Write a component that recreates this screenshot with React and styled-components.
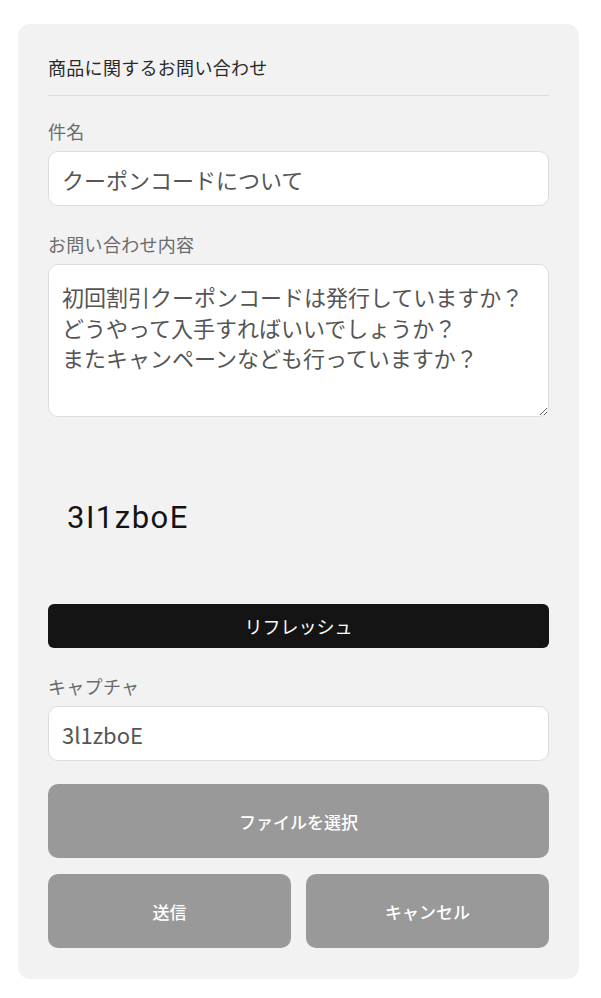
import React, { useState, useEffect, useRef } from 'react';
import styled, { createGlobalStyle } from 'styled-components';

const GlobalStyle = createGlobalStyle`
  * {
    box-sizing: border-box;
  }
  body {
    margin: 0;
    background: #fff;
    font-family: "Noto Sans CJK JP", "Noto Sans", sans-serif;
  }
`

const Page = styled.div`
  padding: 24px 22px 19px 18px;
`

const Card = styled.form`
  display: flex;
  flex-direction: column;
  background: #f2f2f2;
  border-radius: 12px;
  padding: 30px 30px 31px;
`

const Title = styled.h2`
  margin: 0;
  padding-bottom: 14px;
  border-bottom: 1px solid #dcdcdc;
  font-size: 18px;
  font-weight: 400;
  line-height: 27px;
  letter-spacing: 0.3px;
  color: #2a2a2a;
`

const Group = styled.div`
  display: flex;
  flex-direction: column;
  gap: 6px;
  margin-top: ${props => props.top || 24}px;
`

const Label = styled.label`
  font-size: 18px;
  line-height: 28px;
  letter-spacing: 0.3px;
  color: #6b6b6b;
`

const Input = styled.input`
  width: 100%;
  height: 55px;
  padding: 0 13px;
  border: 1px solid #dcdcdc;
  border-radius: 10px;
  background: #fff;
  font-family: inherit;
  font-size: 22px;
  color: #555;
  caret-color: #222;
  outline: none;
`

const TextArea = styled.textarea`
  width: 100%;
  height: 153px;
  padding: 16px 13px;
  border: 1px solid #dcdcdc;
  border-radius: 10px;
  background: #fff;
  font-family: inherit;
  font-size: 22px;
  line-height: 30.5px;
  color: #555;
  outline: none;
  resize: vertical;
  display: block;
`

const CaptchaBox = styled.div`
  display: flex;
  align-items: center;
  height: 150px;
  margin-top: 25px;
  padding-left: 19px;
  font-family: Roboto, "Liberation Sans", sans-serif;
  font-size: 31px;
  letter-spacing: 1.5px;
  color: #141414;
  user-select: none;
`

const RefreshButton = styled.button`
  height: 44px;
  margin-top: 12px;
  border: none;
  border-radius: 6px;
  background: #141414;
  color: #fff;
  font-family: inherit;
  font-size: 18px;
  font-weight: 400;
  cursor: pointer;
`

const GrayButton = styled.button`
  flex: 1;
  height: 74px;
  border: none;
  border-radius: 10px;
  background: #999;
  color: #fff;
  font-family: inherit;
  font-size: 17px;
  font-weight: 500;
  cursor: pointer;
`

const Row = styled.div`
  display: flex;
  gap: 15px;
  margin-top: ${props => props.top}px;
`

const App = () => {
  const [subject, setSubject] = useState('クーポンコードについて');
  const [body, setBody] = useState(
    '初回割引クーポンコードは発行していますか？\nどうやって入手すればいいでしょうか？\nまたキャンペーンなども行っていますか？'
  );
  const [captcha, setCaptcha] = useState('3l1zboE');
  const captchaRef = useRef(null);

  useEffect(() => {
    const el = captchaRef.current;
    if (el) {
      el.focus();
      el.setSelectionRange(el.value.length, el.value.length);
    }
  }, []);

  return (
    <Page>
      <GlobalStyle />
      <Card onSubmit={e => e.preventDefault()}>
        <Title>商品に関するお問い合わせ</Title>
        <Group top={21}>
          <Label>件名</Label>
          <Input value={subject} onChange={e => setSubject(e.target.value)} />
        </Group>
        <Group>
          <Label>お問い合わせ内容</Label>
          <TextArea value={body} onChange={e => setBody(e.target.value)} />
        </Group>
        <CaptchaBox>3I1zboE</CaptchaBox>
        <RefreshButton type="button">リフレッシュ</RefreshButton>
        <Group>
          <Label>キャプチャ</Label>
          <Input
            ref={captchaRef}
            value={captcha}
            onChange={e => setCaptcha(e.target.value)}
          />
        </Group>
        <Row top={23}>
          <GrayButton type="button">ファイルを選択</GrayButton>
        </Row>
        <Row top={16}>
          <GrayButton type="submit">送信</GrayButton>
          <GrayButton type="button">キャンセル</GrayButton>
        </Row>
      </Card>
    </Page>
  );
};

export default App;
